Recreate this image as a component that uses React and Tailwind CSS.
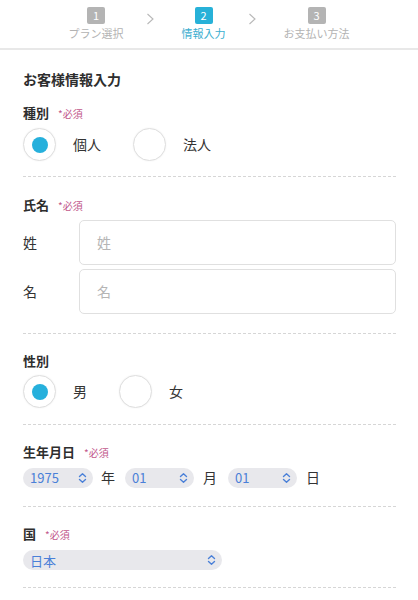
import React from "react";

const font = { fontFamily: '"Noto Sans CJK JP", "Noto Sans", sans-serif' };

function Step({ n, label, active }) {
  return (
    <div className="flex flex-col items-center">
      <div
        className={
          "w-[18px] h-[17px] rounded-[2px] flex items-center justify-center text-white text-[11px] leading-none " +
          (active ? "bg-[#27b1d8]" : "bg-[#b4b4b4]")
        }
      >
        {n}
      </div>
      <div
        className={
          "mt-[2px] text-[11px] leading-[14px] " +
          (active ? "text-[#3aaecf]" : "text-[#b3b3b3]")
        }
      >
        {label}
      </div>
    </div>
  );
}

function Chevron() {
  return (
    <svg width="9" height="12" viewBox="0 0 9 12" className="mb-[10px]">
      <path d="M1.5 1 L7 6 L1.5 11" fill="none" stroke="#b8b8b8" strokeWidth="1.1" />
    </svg>
  );
}

function Req() {
  return <span className="ml-[9px] text-[10px] font-normal text-[#c2588b]">*必須</span>;
}

function Label({ children, req }) {
  return (
    <div className="flex items-baseline text-[13px] leading-[18px] font-bold text-[#2e2e2e]">
      <span>{children}</span>
      {req && <Req />}
    </div>
  );
}

function Radio({ checked, label }) {
  return (
    <div className="flex items-center mr-[32px]">
      <div className="w-[33px] h-[33px] rounded-full border border-[#dedede] bg-white shadow-[0_0_2px_rgba(0,0,0,0.06)] flex items-center justify-center">
        {checked && <div className="w-[16px] h-[16px] rounded-full bg-[#26b0dc]" />}
      </div>
      <span className="ml-[17px] text-[14px] text-[#333]">{label}</span>
    </div>
  );
}

function UpDown() {
  return (
    <svg width="9" height="12" viewBox="0 0 9 12">
      <path d="M1.5 4.5 L4.5 1.8 L7.5 4.5" fill="none" stroke="#4a80d8" strokeWidth="1.4" strokeLinecap="round" strokeLinejoin="round" />
      <path d="M1.5 7.5 L4.5 10.2 L7.5 7.5" fill="none" stroke="#4a80d8" strokeWidth="1.4" strokeLinecap="round" strokeLinejoin="round" />
    </svg>
  );
}

function Select({ value, w }) {
  return (
    <div
      className={
        "h-[20px] rounded-full bg-[#e8e8ec] flex items-center justify-between pl-[7px] pr-[6px] text-[13px] text-[#4a80d8] " +
        w
      }
    >
      <span className="leading-none">{value}</span>
      <UpDown />
    </div>
  );
}

function TextInput({ label, ph }) {
  return (
    <div className="flex items-center">
      <div className="w-[56px] text-[14px] text-[#333]">{label}</div>
      <div className="flex-1 h-[45px] rounded-[5px] border border-[#e0e0e0] flex items-center pl-[17px] text-[14px] text-[#b5b5b5]">
        {ph}
      </div>
    </div>
  );
}

export default function App() {
  return (
    <div className="w-[418px] h-[600px] bg-white overflow-hidden" style={font}>
      <div className="h-[50px] border-b-2 border-[#e8e8e8] flex justify-center items-start pt-[7px]">
        <div className="flex items-center">
          <Step n="1" label="プラン選択" />
          <div className="ml-[22px] mr-[27px] flex items-center"><Chevron /></div>
          <Step n="2" label="情報入力" active />
          <div className="ml-[22px] mr-[27px] flex items-center"><Chevron /></div>
          <Step n="3" label="お支払い方法" />
        </div>
      </div>

      <div className="pl-[23px] pr-[22px]">
        <div className="pt-[18px] text-[14px] leading-[22px] font-bold text-[#2e2e2e]">お客様情報入力</div>

        <div className="mt-[14px] pb-[15px] border-b border-dashed border-[#d6d6d6]">
          <Label req>種別</Label>
          <div className="mt-[5px] flex items-center">
            <Radio checked label="個人" />
            <Radio label="法人" />
          </div>
        </div>

        <div className="pt-[19px] pb-[19px] border-b border-dashed border-[#d6d6d6]">
          <Label req>氏名</Label>
          <div className="mt-[5px] flex flex-col gap-[4px]">
            <TextInput label="姓" ph="姓" />
            <TextInput label="名" ph="名" />
          </div>
        </div>

        <div className="pt-[18px] pb-[16px] border-b border-dashed border-[#d6d6d6]">
          <Label>性別</Label>
          <div className="mt-[5px] flex items-center">
            <Radio checked label="男" />
            <Radio label="女" />
          </div>
        </div>

        <div className="pt-[18px] pb-[18px] border-b border-dashed border-[#d6d6d6]">
          <Label req>生年月日</Label>
          <div className="mt-[5px] flex items-center text-[14px] text-[#333]">
            <Select value="1975" w="w-[70px]" />
            <span className="ml-[8px] mr-[10px]">年</span>
            <Select value="01" w="w-[69px]" />
            <span className="ml-[9px] mr-[11px]">月</span>
            <Select value="01" w="w-[69px]" />
            <span className="ml-[9px]">日</span>
          </div>
        </div>

        <div className="pt-[18px] pb-[17px] border-b border-dashed border-[#d6d6d6]">
          <Label req>国</Label>
          <div className="mt-[6px]">
            <Select value="日本" w="w-[199px]" />
          </div>
        </div>
      </div>
    </div>
  );
}
